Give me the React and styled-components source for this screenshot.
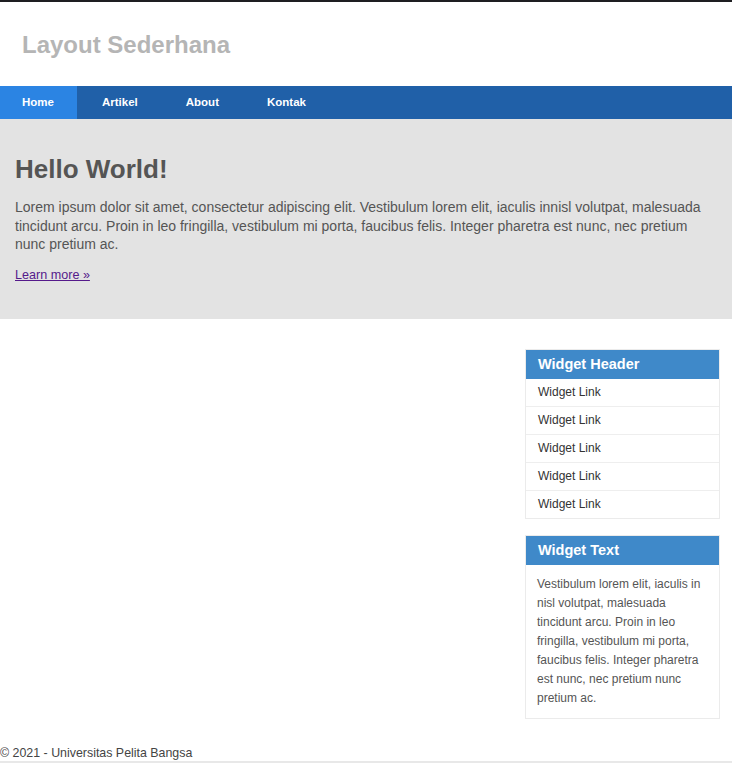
import React from "react";
import styled, { createGlobalStyle } from "styled-components";

const GlobalStyle = createGlobalStyle`
  html, body {
    margin: 0;
    padding: 0;
    background: #ffffff;
  }
  body {
    font-family: "Liberation Sans", Arial, sans-serif;
    font-size: 13px;
    color: #555555;
  }
`;

const menu = ["Home", "Artikel", "About", "Kontak"];
const links = ["Widget Link", "Widget Link", "Widget Link", "Widget Link", "Widget Link"];

export default function App() {
  return (
    <>
      <GlobalStyle />
      <SWrapper>
        <SHeader>
          <STitle>Layout Sederhana</STitle>
        </SHeader>
        <SNav>
          {menu.map((item, index) => (
            <SNavItem key={item} href="#" active={index === 0 ? 1 : 0}>
              {item}
            </SNavItem>
          ))}
        </SNav>
        <SHero>
          <SHeroTitle>Hello World!</SHeroTitle>
          <SHeroText>
            Lorem ipsum dolor sit amet, consectetur adipiscing elit. Vestibulum
            lorem elit, iaculis innisl volutpat, malesuada tincidunt arcu. Proin
            in leo fringilla, vestibulum mi porta, faucibus felis. Integer
            pharetra est nunc, nec pretium nunc pretium ac.
          </SHeroText>
          <SLearnMore href="#">Learn more &raquo;</SLearnMore>
        </SHero>
        <SMain>
          <SSidebar>
            <SWidget>
              <SWidgetHeader>Widget Header</SWidgetHeader>
              <SLinkList>
                {links.map((link, index) => (
                  <SLinkItem key={index}>
                    <SWidgetLink href="#">{link}</SWidgetLink>
                  </SLinkItem>
                ))}
              </SLinkList>
            </SWidget>
            <SWidget>
              <SWidgetHeader>Widget Text</SWidgetHeader>
              <SWidgetText>
                Vestibulum lorem elit, iaculis in nisl volutpat, malesuada
                tincidunt arcu. Proin in leo fringilla, vestibulum mi porta,
                faucibus felis. Integer pharetra est nunc, nec pretium nunc
                pretium ac.
              </SWidgetText>
            </SWidget>
          </SSidebar>
        </SMain>
        <SFooter>&copy; 2021 - Universitas Pelita Bangsa</SFooter>
        <SFooterBar />
      </SWrapper>
    </>
  );
}

const SWrapper = styled.div`
  border-top: 2px solid #1e1e21;
`;

const SHeader = styled.header`
  height: 84px;
  box-sizing: border-box;
  padding: 29px 22px 0;
`;

const STitle = styled.h1`
  margin: 0;
  font-size: 24px;
  line-height: 28px;
  font-weight: bold;
  color: #b5b5b5;
`;

const SNav = styled.nav`
  display: flex;
  height: 33px;
  background-color: #2060a8;
`;

const SNavItem = styled.a`
  display: block;
  padding: 0 23px 0 25px;
  line-height: 33px;
  font-size: 11.5px;
  font-weight: bold;
  color: #ffffff;
  text-decoration: none;
  background-color: ${(props) => (props.active ? "#2b84e3" : "transparent")};
  &:first-child {
    padding-left: 22px;
  }
`;

const SHero = styled.section`
  height: 200px;
  box-sizing: border-box;
  padding: 35px 15px 0;
  background-color: #e3e3e3;
`;

const SHeroTitle = styled.h2`
  margin: 0;
  font-size: 26px;
  line-height: 30px;
  font-weight: bold;
  color: #555555;
`;

const SHeroText = styled.p`
  margin: 14px 0 13px;
  font-size: 14px;
  line-height: 18.6px;
  color: #555555;
`;

const SLearnMore = styled.a`
  display: inline-block;
  font-size: 12.6px;
  line-height: 17px;
  color: #551a8b;
  text-decoration: underline;
`;

const SMain = styled.main`
  display: flex;
  justify-content: flex-end;
  padding: 30px 12px 27px 0;
`;

const SSidebar = styled.aside`
  display: flex;
  flex-direction: column;
  gap: 16px;
  width: 195px;
`;

const SWidget = styled.div`
  border: 1px solid #ebebeb;
`;

const SWidgetHeader = styled.h3`
  margin: 0;
  height: 29px;
  padding: 0 12px;
  line-height: 29px;
  font-size: 14.5px;
  font-weight: bold;
  color: #ffffff;
  background-color: #3f89c9;
`;

const SLinkList = styled.ul`
  margin: 0;
  padding: 0;
  list-style: none;
`;

const SLinkItem = styled.li`
  border-top: 1px solid #eeeeee;
  &:first-child {
    border-top: none;
  }
`;

const SWidgetLink = styled.a`
  display: block;
  height: 27px;
  padding: 0 12px;
  line-height: 26px;
  font-size: 12px;
  color: #333333;
  text-decoration: none;
`;

const SWidgetText = styled.p`
  margin: 0;
  padding: 10px 11px 10px 11px;
  font-size: 12px;
  line-height: 19px;
  color: #555555;
`;

const SFooter = styled.footer`
  font-size: 12.4px;
  line-height: 15px;
  color: #444444;
`;

const SFooterBar = styled.div`
  height: 40px;
  background-color: #e8e8e8;
`;
